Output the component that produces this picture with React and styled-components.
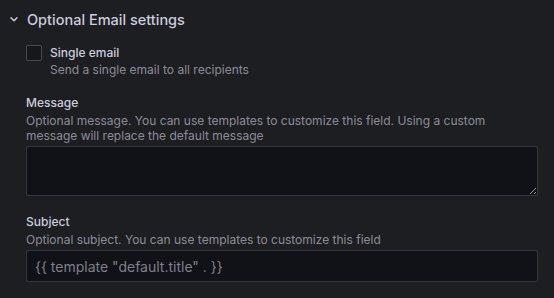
import styled, { createGlobalStyle } from "styled-components"

const GlobalStyle = createGlobalStyle`
    html, body {
        margin: 0;
        padding: 0;
        background: #1d1e22;
    }
    * {
        box-sizing: border-box;
    }
`

const App = () => {
    return <>
        <GlobalStyle/>
        <Page>
            {/* 접히는 섹션 헤더 */}
            <SectionHeader>
                <Chevron viewBox="0 0 16 16">
                    <path d="M5 6.75 L8 9.75 L11 6.75" fill="none" stroke="#ccccdc" strokeWidth="1.5"
                          strokeLinecap="round" strokeLinejoin="round"/>
                </Chevron>
                <SectionTitle>Optional Email settings</SectionTitle>
            </SectionHeader>

            <Body>
                {/* 체크박스 */}
                <CheckRow>
                    <CheckBox/>
                    <div>
                        <CheckLabel>Single email</CheckLabel>
                        <Description>Send a single email to all recipients</Description>
                    </div>
                </CheckRow>

                {/* 메시지 */}
                <Field>
                    <Label>Message</Label>
                    <Description>
                        Optional message. You can use templates to customize this field. Using a custom
                        <br/>message will replace the default message
                    </Description>
                    <TextArea/>
                </Field>

                {/* 제목 */}
                <Field>
                    <Label>Subject</Label>
                    <Description>Optional subject. You can use templates to customize this field</Description>
                    <Input placeholder={'{{ template "default.title" . }}'}/>
                </Field>
            </Body>
        </Page>
    </>
}

export default App


//-----------------------------------------------
// 레이아웃 :

const Page = styled.div`
    width: 554px;
    height: 298px;
    padding: 8px 17px 0 6px;
    font-family: Inter, "Noto Sans", sans-serif;
    color: #ccccdc;
    overflow: hidden;
`
const SectionHeader = styled.div`
    display: flex;
    align-items: center;
    height: 22px;
    gap: 5px;
`
const Chevron = styled.svg`
    width: 16px;
    height: 16px;
`
const SectionTitle = styled.h3`
    margin: 0;
    font-size: 14.5px;
    font-weight: 500;
    color: #ccccdc;
`
const Body = styled.div`
    padding-left: 20px;
    padding-top: 15px;
    display: flex;
    flex-direction: column;
    gap: 17px;
`

//-----------------------------------------------
// 체크박스 :

const CheckRow = styled.div`
    display: flex;
    gap: 8px;
    align-items: flex-start;
`
const CheckBox = styled.div`
    width: 16px;
    height: 16px;
    border: 1px solid rgba(204, 204, 220, 0.28);
    border-radius: 2px;
    background: #16171b;
`
const CheckLabel = styled.div`
    font-size: 12px;
    font-weight: 500;
    line-height: 16px;
    color: #ccccdc;
`

//-----------------------------------------------
// 필드 :

const Field = styled.div`
    display: flex;
    flex-direction: column;
`
const Label = styled.div`
    font-size: 12px;
    font-weight: 500;
    line-height: 18px;
    color: #ccccdc;
`
const Description = styled.div`
    font-size: 12px;
    line-height: 15px;
    color: rgba(204, 204, 220, 0.65);
    margin-top: 1px;
`
const TextArea = styled.textarea`
    margin-top: 3px;
    width: 512px;
    height: 50px;
    background: #111217;
    border: 1px solid rgba(204, 204, 220, 0.2);
    border-radius: 2px;
    color: #ccccdc;
    font-family: inherit;
    font-size: 14px;
    resize: vertical;
    outline: none;
`
const Input = styled.input`
    margin-top: 3px;
    width: 512px;
    height: 32px;
    padding: 0 8px;
    background: #111217;
    border: 1px solid rgba(204, 204, 220, 0.2);
    border-radius: 2px;
    color: #ccccdc;
    font-family: inherit;
    font-size: 14px;
    outline: none;

    &::placeholder {
        color: rgba(204, 204, 220, 0.6);
    }
`
